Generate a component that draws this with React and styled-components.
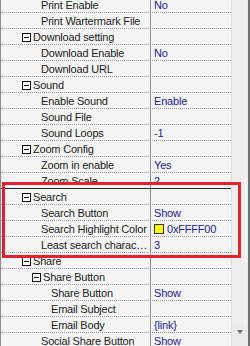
import React from "react";
import styled, { createGlobalStyle } from "styled-components";

const Global = createGlobalStyle`
  html, body { margin: 0; padding: 0; background: #fff; }
  #root { width: 250px; height: 346px; }
`;

const Frame = styled.div`
  position: relative;
  width: 250px;
  height: 346px;
  box-sizing: border-box;
  border-left: 1px solid #8a8a8a;
  border-right: 2px solid #6e6e6e;
  display: flex;
  overflow: hidden;
  font-family: Tahoma, "Liberation Sans", Arial, sans-serif;
  font-size: 11px;
  letter-spacing: -0.2px;
`;

const Grid = styled.div`
  flex: 1;
  background: #f4f4f4;
  overflow: hidden;
`;

const List = styled.div`
  margin-top: -3px;
  display: flex;
  flex-direction: column;
`;

const Row = styled.div`
  display: grid;
  grid-template-columns: 150px 1fr;
  height: 16px;
  box-sizing: border-box;
  border-bottom: 1px ${(p) => (p.$strong ? "solid #2a2a2a" : "dotted #9a9a9a")};
`;

const NameCell = styled.div`
  display: flex;
  align-items: center;
  gap: 2px;
  padding-left: ${(p) => p.$indent}px;
  padding-top: 1px;
  border-right: 1px solid #8c8c8c;
  color: #1c1c1c;
  white-space: nowrap;
  overflow: hidden;
  min-width: 0;
`;

const NameText = styled.span`
  overflow: hidden;
  text-overflow: ellipsis;
  line-height: 14px;
`;

const ValueCell = styled.div`
  display: flex;
  align-items: center;
  gap: 3px;
  padding-left: 3px;
  padding-top: 1px;
  color: #23238c;
  white-space: nowrap;
  overflow: hidden;
  line-height: 14px;
`;

const Expander = styled.span`
  position: relative;
  flex: none;
  width: 9px;
  height: 9px;
  box-sizing: border-box;
  border: 1px solid #111;
  background: #fff;
  &::after {
    content: "";
    position: absolute;
    left: 1px;
    top: 3px;
    width: 5px;
    height: 1px;
    background: #111;
  }
`;

const Swatch = styled.span`
  flex: none;
  width: 10px;
  height: 10px;
  box-sizing: border-box;
  border: 1px solid #333;
  background: #ffff00;
`;

const Scrollbar = styled.div`
  width: 16px;
  flex: none;
  background: #ececec;
  border-left: 1px solid #dedede;
  display: flex;
  flex-direction: column;
`;

const Thumb = styled.div`
  flex: 1;
  margin: 0 2px 0 0;
  border-right: 1px solid #f8f8f8;
  background: #eeeeee;
`;

const ArrowButton = styled.div`
  height: 16px;
  display: flex;
  align-items: center;
  justify-content: center;
  padding-bottom: 6px;
  &::before {
    content: "";
    border-left: 3.5px solid transparent;
    border-right: 3.5px solid transparent;
    border-top: 4px solid #707070;
  }
`;

const Highlight = styled.div`
  position: absolute;
  left: 1px;
  top: 182px;
  width: 239px;
  height: 76px;
  box-sizing: border-box;
  border: 3px solid #e0222e;
  pointer-events: none;
`;

const rows = [
  { name: "Print Enable", level: 2, value: "No" },
  { name: "Print Wartermark File", level: 2 },
  { name: "Download setting", level: 1, group: true },
  { name: "Download Enable", level: 2, value: "No" },
  { name: "Download URL", level: 2 },
  { name: "Sound", level: 1, group: true },
  { name: "Enable Sound", level: 2, value: "Enable" },
  { name: "Sound File", level: 2 },
  { name: "Sound Loops", level: 2, value: "-1" },
  { name: "Zoom Config", level: 1, group: true },
  { name: "Zoom in enable", level: 2, value: "Yes" },
  { name: "Zoom Scale", level: 2, value: "2", strong: true },
  { name: "Search", level: 1, group: true },
  { name: "Search Button", level: 2, value: "Show" },
  { name: "Search Highlight Color", level: 2, value: "0xFFFF00", color: true },
  { name: "Least search characters", level: 2, value: "3" },
  { name: "Share", level: 1, group: true },
  { name: "Share Button", level: 2, group: true },
  { name: "Share Button", level: 3, value: "Show" },
  { name: "Email Subject", level: 3 },
  { name: "Email Body", level: 3, value: "{link}" },
  { name: "Social Share Button", level: 2, value: "Show" },
];

const indentFor = (r) => {
  if (r.group) return r.level === 1 ? 21 : 31;
  return r.level === 2 ? 40 : 50;
};

export default function App() {
  return (
    <>
      <Global />
      <Frame>
        <Grid>
          <List>
            {rows.map((r, i) => (
              <Row key={i} $strong={r.strong}>
                <NameCell $indent={indentFor(r)}>
                  {r.group && <Expander />}
                  <NameText>{r.name}</NameText>
                </NameCell>
                <ValueCell>
                  {r.color && <Swatch />}
                  {r.value}
                </ValueCell>
              </Row>
            ))}
          </List>
        </Grid>
        <Scrollbar>
          <Thumb />
          <ArrowButton />
        </Scrollbar>
        <Highlight />
      </Frame>
    </>
  );
}
